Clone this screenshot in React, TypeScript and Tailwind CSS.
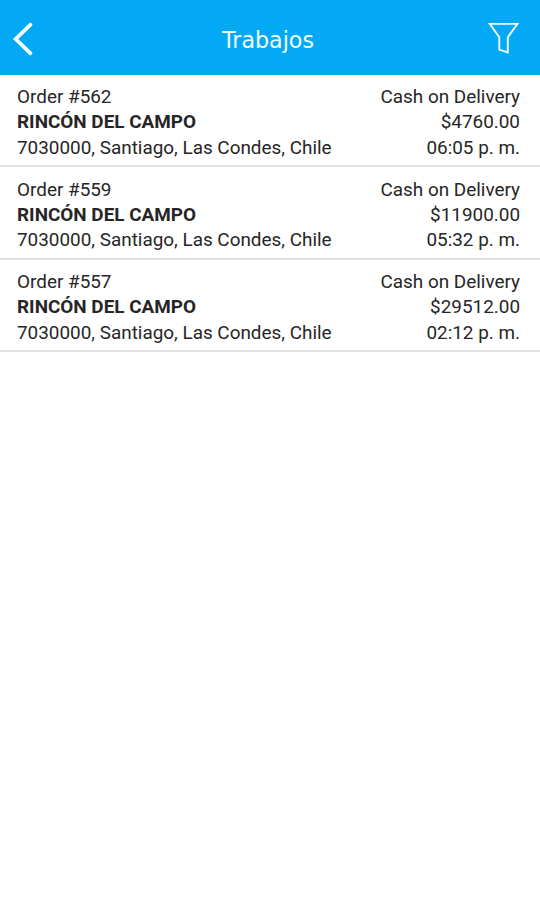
const jobs = [
  { id: 562, total: "$4760.00", time: "06:05 p. m." },
  { id: 559, total: "$11900.00", time: "05:32 p. m." },
  { id: 557, total: "$29512.00", time: "02:12 p. m." },
];

export default function App() {
  return (
    <div className="h-[900px] w-[540px] overflow-hidden bg-white font-[Roboto,sans-serif] text-[#262626]">
      <header className="flex h-[74.5px] items-center justify-between bg-[#03a9f4] pt-1 pr-[20px] pl-[12px] text-[#f4fcff]">
        <svg width="34" height="36" viewBox="0 0 34 36" fill="none" stroke="currentColor" strokeWidth="3.8" strokeLinecap="round">
          <path d="M18.5 3.7L3.7 18L18.5 32.3" />
        </svg>
        <h1 className="pt-[2px] pl-[4px] font-['DejaVu_Sans',sans-serif] text-[22.2px] leading-8">Trabajos</h1>
        <svg width="34" height="36" viewBox="0 0 34 36" fill="none" stroke="currentColor" strokeWidth="1.9" strokeLinejoin="miter">
          <path d="M3.8 2.9H31.4L21.8 16.2V31.5L13.3 28.6V16.2Z" />
        </svg>
      </header>
      <main>
        {jobs.map((job) => (
          <section key={job.id} className="flex h-[92.5px] justify-between border-b-2 border-[#e2e2e2] pt-[9.7px] pr-5 pl-[17px] text-[18.9px] leading-[25.2px]">
            <div>
              <p>Order #{job.id}</p>
              <p className="font-bold">RINCÓN DEL CAMPO</p>
              <p>7030000, Santiago, Las Condes, Chile</p>
            </div>
            <div className="text-right">
              <p>Cash on Delivery</p>
              <p>{job.total}</p>
              <p>{job.time}</p>
            </div>
          </section>
        ))}
      </main>
    </div>
  );
}
